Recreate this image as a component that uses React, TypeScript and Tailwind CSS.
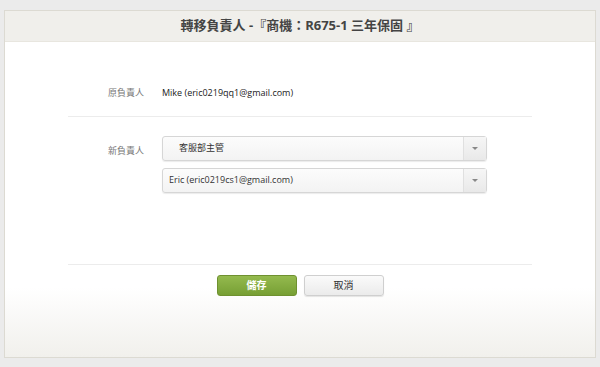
import { ReactNode } from "react";

const font = { fontFamily: '"Open Sans", "Noto Sans CJK TC", sans-serif' };

function Select({ children, indent }: { children: ReactNode; indent?: boolean }) {
  return (
    <div className="flex h-[25px] w-[325px] items-stretch rounded-[3px] border border-[#d6d6d6] bg-gradient-to-b from-[#fcfcfc] to-[#f3f3f3] shadow-[0_1px_1px_rgba(0,0,0,0.08)]">
      <div className={`flex flex-1 items-center text-[9px] text-[#333] ${indent ? "pl-[16px]" : "pl-[6px]"}`}>
        {children}
      </div>
      <div className="flex w-[23px] items-center justify-center border-l border-[#e0e0e0] bg-gradient-to-b from-[#f6f6f6] to-[#e9e9e9]">
        <div className="h-0 w-0 border-x-[3px] border-t-[3px] border-x-transparent border-t-[#888]" />
      </div>
    </div>
  );
}

export default function App() {
  return (
    <div className="h-[367px] w-[600px] bg-[#ebebeb] px-[4px] pt-[10px]" style={font}>
      <div className="flex h-[348px] flex-col border border-[#dcdad2] bg-white">
        <div className="flex h-[31px] items-center justify-center border-b border-[#e8e6df] bg-[#f0efeb] text-[13px] font-bold text-[#444]">
          轉移負責人 -『商機：R675-1 三年保固 』
        </div>
        <div className="flex flex-1 flex-col bg-gradient-to-b from-white from-[78%] to-[#f1f0ec]">
          <div className="mx-[63px] mt-[44px] flex flex-col">
            <div className="flex items-center pb-[16px] border-b border-[#ececec]">
              <div className="w-[94px] pl-[40px] text-[9px] text-[#777]">原負責人</div>
              <div className="text-[9px] text-[#222]">Mike (eric0219qq1@gmail.com)</div>
            </div>
            <div className="flex pt-[19px] h-[148px] border-b border-[#ececec]">
              <div className="w-[94px] pl-[40px] pt-[8px] text-[9px] text-[#777]">新負責人</div>
              <div className="flex flex-col gap-[7px]">
                <Select indent>客服部主管</Select>
                <Select>Eric (eric0219cs1@gmail.com)</Select>
              </div>
            </div>
          </div>
          <div className="mt-[10px] flex justify-center gap-[7px]">
            <button className="flex h-[21px] w-[80px] items-center justify-center rounded-[3px] border border-[#6f9130] bg-gradient-to-b from-[#94ba4e] to-[#779f34] text-[10px] font-bold text-white">
              儲存
            </button>
            <button className="flex h-[21px] w-[80px] items-center justify-center rounded-[3px] border border-[#cfcfcf] bg-gradient-to-b from-[#fafafa] to-[#ebebeb] text-[10px] text-[#333] shadow-[0_1px_1px_rgba(0,0,0,0.1)]">
              取消
            </button>
          </div>
        </div>
      </div>
    </div>
  );
}
